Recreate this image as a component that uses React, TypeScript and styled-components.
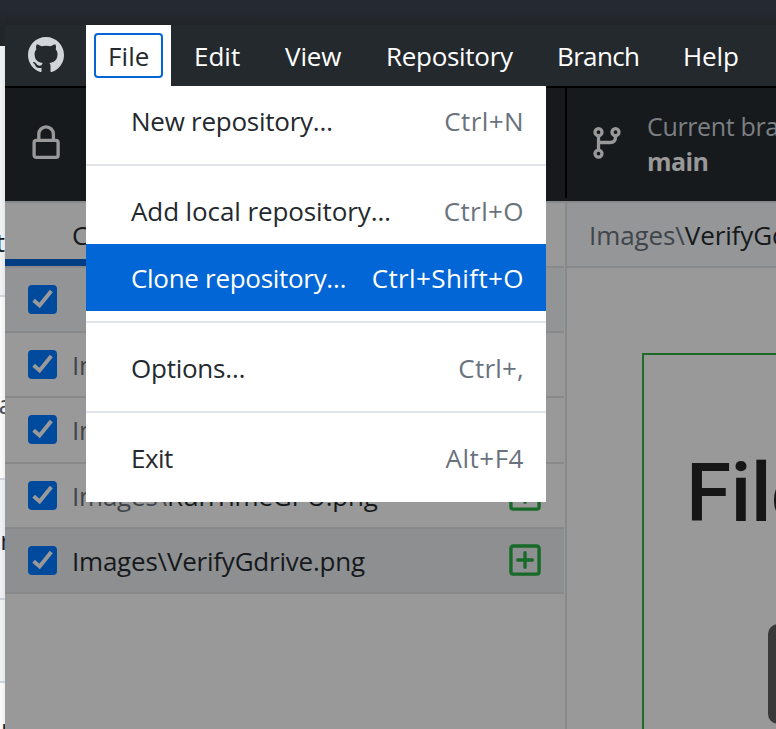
import React from 'react';
import styled, { createGlobalStyle } from 'styled-components';

const GlobalStyle = createGlobalStyle`
  * { box-sizing: border-box; }
  html, body { margin: 0; padding: 0; overflow: hidden; }
  body {
    font-family: 'Open Sans', 'Noto Sans', sans-serif;
    font-size: 26px;
    font-weight: 370;
    color: #16191c;
  }
`;

const Desktop = styled.div`
  display: flex;
  width: 776px;
  height: 729px;
  overflow: hidden;
  background: #222629;
`;

/* Page that shows behind the left edge of the window */
const BehindPage = styled.div`
  flex: none;
  width: 5px;
  display: flex;
  flex-direction: column;
  overflow: hidden;
`;

const BehindTop = styled.div`
  flex: none;
  height: 46px;
  background: linear-gradient(#252932, #212528);
`;

const BehindRow = styled.div<{ $h: number; $bg: string; $ink?: string }>`
  flex: none;
  height: ${(p) => p.$h}px;
  overflow: hidden;
  background: linear-gradient(to right, transparent, rgba(0, 0, 0, 0.05)), ${(p) => p.$bg};
  border-bottom: 2px solid #cdd3da;
  color: ${(p) => p.$ink ?? '#16191c'};
  line-height: 36px;
  white-space: nowrap;
  display: flex;
  flex-direction: column;
  align-items: flex-end;
`;

const BehindGlyph = styled.span<{ $top: number; $trim?: number }>`
  margin-top: ${(p) => p.$top}px;
  margin-right: ${(p) => p.$trim ?? 0}px;
`;

const WindowColumn = styled.div`
  flex: 1;
  min-width: 0;
  display: flex;
  flex-direction: column;
`;

const TopBand = styled.div`
  flex: none;
  height: 25px;
  background: linear-gradient(#252932 0%, #252a31 45%, #212427 100%);
`;

const TitleBar = styled.header`
  flex: none;
  height: 61px;
  display: flex;
  background: #24292e;
`;

const LogoCell = styled.div`
  flex: none;
  width: 81px;
  padding: 12px 0 0 23px;
  svg { display: block; }
`;

const MenuTab = styled.div<{ $w: number; $gap?: number }>`
  flex: none;
  width: ${(p) => p.$w}px;
  height: 61px;
  padding-left: 23px;
  line-height: 63px;
  color: #fff;
  letter-spacing: ${(p) => p.$gap ?? 0}px;
  white-space: nowrap;
`;

const OpenTab = styled.div`
  flex: none;
  position: relative;
  width: 85px;
  height: 61px;
  padding: 8px;
  background: #fff;
`;

const FocusFrame = styled.div`
  width: 69px;
  height: 45px;
  border: 2px solid #0366d6;
  border-radius: 4px;
  padding-left: 12px;
  line-height: 43px;
  letter-spacing: 0.1px;
  color: #24292e;
`;

const Menu = styled.div`
  position: absolute;
  z-index: 5;
  top: 61px;
  left: 0;
  width: 460px;
  height: 416px;
  padding-top: 2px;
  background: #fff;
`;

const MenuItem = styled.div<{ $active?: boolean; $line?: number }>`
  display: flex;
  justify-content: space-between;
  height: 67px;
  padding: 0 22px 0 45px;
  line-height: ${(p) => p.$line ?? 67}px;
  white-space: nowrap;
  font-weight: ${(p) => (p.$active ? 410 : 370)};
  background: ${(p) => (p.$active ? '#0366d6' : '#fff')};
  color: ${(p) => (p.$active ? '#fff' : '#24292e')};
`;

const ItemLabel = styled.span<{ $gap: number }>`
  letter-spacing: ${(p) => p.$gap}px;
`;

const Shortcut = styled.span<{ $active?: boolean; $gap: number }>`
  color: ${(p) => (p.$active ? '#fff' : '#6a737d')};
  letter-spacing: ${(p) => p.$gap}px;
`;

const Separator = styled.div<{ $below: number; $above: number }>`
  height: 2px;
  margin: ${(p) => p.$above}px 0 ${(p) => p.$below}px;
  background: #e1e4e8;
`;

const Toolbar = styled.div`
  flex: none;
  display: flex;
  height: 115px;
  border-top: 2px solid #000;
  background: #161a1d;
`;

const RepoCell = styled.div`
  flex: none;
  width: 560px;
  padding: 36px 0 0 25px;
  svg { display: block; }
`;

const BranchCell = styled.div`
  flex: 1;
  height: 110px;
  display: flex;
  border-left: 2px solid #000;
  svg { display: block; flex: none; margin: 37px 0 0 24px; }
`;

const BranchText = styled.div`
  flex: none;
  margin: 21px 0 0 24px;
  white-space: nowrap;
`;

const BranchCaption = styled.div`
  height: 34px;
  line-height: 35px;
  font-size: 25px;
  color: #7d8083;
  letter-spacing: -0.35px;
`;

const BranchName = styled.div`
  height: 34px;
  line-height: 36px;
  font-size: 25px;
  font-weight: 700;
  letter-spacing: -0.6px;
  color: #999;
`;

const Body = styled.div`
  flex: 1;
  min-height: 0;
  display: flex;
  border-top: 2px solid #87898b;
  background: #999;
`;

const Sidebar = styled.aside`
  flex: none;
  width: 562px;
  padding-right: 1px;
  border-right: 2px solid #87898b;
`;

const SidebarTabs = styled.div`
  height: 65px;
  display: flex;
  border-bottom: 2px solid #87898b;
`;

const ChangesTab = styled.div`
  width: 280px;
  height: 63px;
  padding-left: 67px;
  line-height: 65px;
  border-bottom: 7px solid #013d80;
`;

const FileRow = styled.div<{ $h: number; $bg?: string }>`
  display: flex;
  height: ${(p) => p.$h}px;
  padding: 17px 24px 0 23px;
  border-bottom: 2px solid #87898b;
  background: ${(p) => p.$bg ?? '#999'};
  svg { display: block; flex: none; }
`;

const FilePath = styled.div`
  flex: 1;
  margin-left: 15px;
  height: 32px;
  line-height: 31px;
  letter-spacing: -0.22px;
  white-space: nowrap;
`;

const Folder = styled.span`
  color: #40454b;
`;

const AddedSlot = styled.div`
  flex: none;
  height: 36px;
  margin: -4px -2.5px 0 0;
`;

const DiffPane = styled.main`
  flex: 1;
  min-width: 0;
  display: flex;
  flex-direction: column;
`;

const DiffHeader = styled.div`
  flex: none;
  height: 65px;
  padding-left: 22px;
  line-height: 65px;
  letter-spacing: -0.1px;
  border-bottom: 2px solid #87898b;
  background: #949698;
  white-space: nowrap;
  overflow: hidden;
`;

const ImagePreview = styled.div`
  flex: 1;
  margin: 85px 0 0 75px;
  border: solid #1c6b2b;
  border-width: 2px 0 0 2px;
  overflow: hidden;
`;

const PreviewTitle = styled.div`
  margin: 90px 0 0 42px;
  height: 96px;
  line-height: 96px;
  font-family: Roboto, sans-serif;
  font-size: 82px;
  font-weight: 500;
  letter-spacing: -0.7px;
  color: #161616;
  white-space: nowrap;
  filter: blur(0.7px);
`;

const PreviewButton = styled.div`
  margin: 83px 0 0 124px;
  width: 60px;
  height: 100px;
  border-radius: 10px;
  background: #393939;
  filter: blur(0.6px);
`;

const GitHubMark = () => (
  <svg width="36" height="36" viewBox="0 0 16 16" fill="#d1d5da">
    <path d="M8 0C3.58 0 0 3.58 0 8c0 3.54 2.29 6.53 5.47 7.59.4.07.55-.17.55-.38 0-.19-.01-.82-.01-1.49-2.01.37-2.53-.49-2.69-.94-.09-.23-.48-.94-.82-1.13-.28-.15-.68-.52-.01-.53.63-.01 1.08.58 1.23.82.72 1.21 1.87.87 2.33.66.07-.52.28-.87.51-1.07-1.78-.2-3.64-.89-3.64-3.95 0-.87.31-1.59.82-2.15-.08-.2-.36-1.02.08-2.12 0 0 .67-.21 2.2.82.64-.18 1.32-.27 2-.27.68 0 1.36.09 2 .27 1.53-1.04 2.2-.82 2.2-.82.44 1.1.16 1.92.08 2.12.51.56.82 1.27.82 2.15 0 3.07-1.87 3.75-3.65 3.95.29.25.54.73.54 1.48 0 1.07-.01 1.93-.01 2.2 0 .21.15.46.55.38A8.013 8.013 0 0016 8c0-4.42-3.58-8-8-8z" />
  </svg>
);

const LockIcon = () => (
  <svg width="32" height="36" viewBox="0 0 32 36" fill="none" stroke="#999" strokeWidth="3.3">
    <rect x="4.1" y="16.4" width="24" height="17" rx="2.2" />
    <path d="M8.8 16V10.2a7.3 7.3 0 0 1 14.6 0V16" />
  </svg>
);

const BranchIcon = () => (
  <svg width="32" height="36" viewBox="0 0 32 36" fill="none" stroke="#999" strokeWidth="3.3">
    <circle cx="7.5" cy="7.2" r="3.5" />
    <circle cx="24.5" cy="7.2" r="3.5" />
    <circle cx="7.5" cy="28.6" r="3.5" />
    <path d="M7.5 10.7V25.1M24.5 10.7v1.6q0 5.2-5.2 5.2H7.5" />
  </svg>
);

const Checkbox = () => (
  <svg width="29" height="29" viewBox="0 0 29 29">
    <rect width="29" height="29" rx="4" fill="#004a9e" />
    <path d="M5.6 15.3l6 5.2L23.3 6" fill="none" stroke="#999" strokeWidth="3.9" />
  </svg>
);

const AddedIcon = () => (
  <svg width="36" height="36" viewBox="0 0 16 16" fill="#186a29">
    <path d="M2.75 1h10.5c.966 0 1.75.784 1.75 1.75v10.5A1.75 1.75 0 0 1 13.25 15H2.75A1.75 1.75 0 0 1 1 13.25V2.75C1 1.784 1.784 1 2.75 1Zm10.5 1.5H2.75a.25.25 0 0 0-.25.25v10.5c0 .138.112.25.25.25h10.5a.25.25 0 0 0 .25-.25V2.75a.25.25 0 0 0-.25-.25ZM8 4a.75.75 0 0 1 .75.75v2.5h2.5a.75.75 0 0 1 0 1.5h-2.5v2.5a.75.75 0 0 1-1.5 0v-2.5h-2.5a.75.75 0 0 1 0-1.5h2.5v-2.5A.75.75 0 0 1 8 4Z" />
  </svg>
);

const files = [
  { height: 65, folder: 'Images\\', name: '' },
  { height: 66, folder: 'Images\\', name: '' },
  { height: 65, folder: 'Images\\', name: 'RunTimeGPU.png' },
  { height: 65, folder: 'Images\\', name: 'VerifyGdrive.png', selected: true },
];

export default function App() {
  return (
    <>
      <GlobalStyle />
      <Desktop>
        <BehindPage>
          <BehindTop />
          <BehindRow $h={251} $bg="#f1f3f5">
            <BehindGlyph $top={178}>t</BehindGlyph>
          </BehindRow>
          <BehindRow $h={183} $bg="#fcfcfc" $ink="#4a4f57">
            <BehindGlyph $top={89} $trim={-8}>a</BehindGlyph>
          </BehindRow>
          <BehindRow $h={120} $bg="#f0f2f5" $ink="#15233f">
            <BehindGlyph $top={42} $trim={-6}>r</BehindGlyph>
          </BehindRow>
          <BehindRow $h={83} $bg="#f3f4f6" />
          <BehindRow $h={60} $bg="#fcfcfc" $ink="#15233f">
            <BehindGlyph $top={27} $trim={-12}>n</BehindGlyph>
          </BehindRow>
        </BehindPage>
        <WindowColumn>
          <TopBand />
          <TitleBar>
            <LogoCell><GitHubMark /></LogoCell>
            <OpenTab>
              <FocusFrame>File</FocusFrame>
              <Menu>
                <MenuItem>
                  <ItemLabel $gap={-0.25}>New repository…</ItemLabel>
                  <Shortcut $gap={0.4}>Ctrl+N</Shortcut>
                </MenuItem>
                <Separator $above={9} $below={11} />
                <MenuItem $line={69}>
                  <ItemLabel $gap={-0.1}>Add local repository…</ItemLabel>
                  <Shortcut $gap={0.4}>Ctrl+O</Shortcut>
                </MenuItem>
                <MenuItem $active $line={69}>
                  <ItemLabel $gap={-0.3}>Clone repository…</ItemLabel>
                  <Shortcut $active $gap={0.4}>Ctrl+Shift+O</Shortcut>
                </MenuItem>
                <Separator $above={10} $below={12} />
                <MenuItem>
                  <ItemLabel $gap={-0.25}>Options…</ItemLabel>
                  <Shortcut $gap={0.2}>Ctrl+,</Shortcut>
                </MenuItem>
                <Separator $above={9} $below={12} />
                <MenuItem>
                  <ItemLabel $gap={-0.5}>Exit</ItemLabel>
                  <Shortcut $gap={0.5}>Alt+F4</Shortcut>
                </MenuItem>
              </Menu>
            </OpenTab>
            <MenuTab $w={91}>Edit</MenuTab>
            <MenuTab $w={101} $gap={-0.1}>View</MenuTab>
            <MenuTab $w={171} $gap={-0.3}>Repository</MenuTab>
            <MenuTab $w={126} $gap={-0.65}>Branch</MenuTab>
            <MenuTab $w={100} $gap={-0.1}>Help</MenuTab>
          </TitleBar>
          <Toolbar>
            <RepoCell><LockIcon /></RepoCell>
            <BranchCell>
              <BranchIcon />
              <BranchText>
                <BranchCaption>Current branch</BranchCaption>
                <BranchName>main</BranchName>
              </BranchText>
            </BranchCell>
          </Toolbar>
          <Body>
            <Sidebar>
              <SidebarTabs><ChangesTab>Changes</ChangesTab></SidebarTabs>
              <FileRow $h={65} $bg="#929496"><Checkbox /></FileRow>
              {files.map((file, i) => (
                <FileRow key={i} $h={file.height} $bg={file.selected ? '#8d8f91' : undefined}>
                  <Checkbox />
                  <FilePath>
                    {file.selected ? file.folder : <Folder>{file.folder}</Folder>}
                    {file.name}
                  </FilePath>
                  <AddedSlot><AddedIcon /></AddedSlot>
                </FileRow>
              ))}
            </Sidebar>
            <DiffPane>
              <DiffHeader><Folder>Images\</Folder>VerifyGdrive.png</DiffHeader>
              <ImagePreview>
                <PreviewTitle>File</PreviewTitle>
                <PreviewButton />
              </ImagePreview>
            </DiffPane>
          </Body>
        </WindowColumn>
      </Desktop>
    </>
  );
}
